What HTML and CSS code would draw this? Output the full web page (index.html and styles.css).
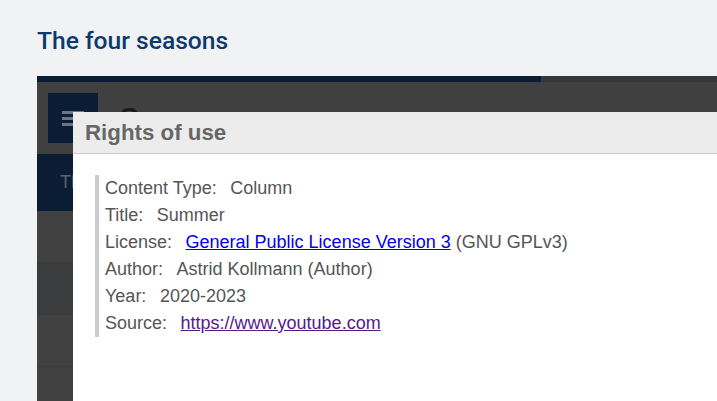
FILE: index.html
```html
<!DOCTYPE html>
<html lang="en">
<head>
<meta charset="utf-8">
<title>The four seasons</title>
<link rel="stylesheet" href="styles.css">
</head>
<body>
<div class="page">
  <h1 class="page-title">The four seasons</h1>
  <div class="player">
    <div class="progress"><div class="progress-fill"></div></div>
    <div class="player-header">
      <div class="menu-btn">
        <svg width="22" height="18" viewBox="0 0 22 18"><rect x="0" y="2" width="22" height="3" fill="#6b7585"/><rect x="0" y="8" width="22" height="3" fill="#6b7585"/><rect x="0" y="14" width="22" height="3" fill="#6b7585"/></svg>
      </div>
      <div class="player-heading">Summer</div>
    </div>
    <div class="player-nav"><span class="nav-text">The four seasons</span></div>
    <div class="player-row"></div>
    <div class="player-row alt"></div>
    <div class="player-row"></div>
    <div class="player-row"></div>

    <div class="dialog">
      <div class="dialog-head"><h2 class="dialog-title">Rights of use</h2></div>
      <div class="dialog-body">
        <dl class="rights">
          <div class="rights-row"><dt>Content Type:</dt><dd>Column</dd></div>
          <div class="rights-row"><dt>Title:</dt><dd>Summer</dd></div>
          <div class="rights-row"><dt>License:</dt><dd><a class="link" href="#gpl">General Public License Version 3</a> (GNU GPLv3)</dd></div>
          <div class="rights-row"><dt>Author:</dt><dd>Astrid Kollmann (Author)</dd></div>
          <div class="rights-row"><dt>Year:</dt><dd>2020-2023</dd></div>
          <div class="rights-row"><dt>Source:</dt><dd><a class="link visited" href="#yt">https://www.youtube.com</a></dd></div>
        </dl>
      </div>
    </div>
  </div>
</div>
</body>
</html>
```

FILE: styles.css
```css
html, body {
  margin: 0;
  padding: 0;
  height: 100%;
  overflow: hidden;
}
body {
  background: #f1f2f4;
  font-family: "Liberation Sans", Arial, sans-serif;
}
.page {
  padding: 27px 0 0 37px;
}
.page-title {
  margin: 0 0 21px 0;
  font-family: Roboto, "Noto Sans", sans-serif;
  font-weight: 500;
  font-size: 24.6px;
  line-height: 28px;
  color: #0d3a6d;
}
.player {
  position: relative;
  background: #404040;
  height: 330px;
}
.progress {
  height: 6px;
  background: #35373b;
}
.progress-fill {
  width: 504px;
  height: 6px;
  background: #0b1d34;
}
.player-header {
  height: 72px;
  box-sizing: border-box;
  padding: 11px;
  display: flex;
  align-items: center;
  gap: 22px;
  background: #404040;
}
.menu-btn {
  width: 50px;
  height: 50px;
  background: #0b1d34;
  display: flex;
  align-items: center;
  justify-content: center;
}
.player-heading {
  color: #1b1b1b;
  font-size: 28px;
  font-weight: bold;
}
.player-nav {
  height: 57px;
  background: #0b1d34;
  display: flex;
  align-items: center;
  padding-left: 23px;
}
.nav-text {
  color: #5e6166;
  font-size: 18px;
}
.player-row {
  height: 51px;
  border-bottom: 1px solid #3a3a3a;
  background: #414141;
}
.player-row.alt {
  background: #3b3c3e;
}
.dialog {
  position: absolute;
  left: 36px;
  top: 36px;
  right: 0;
  bottom: 0;
  background: #ffffff;
}
.dialog-head {
  height: 41px;
  background: #ececec;
  border-bottom: 1px solid #cccccc;
  display: flex;
  align-items: center;
  padding-left: 12px;
}
.dialog-title {
  margin: 0;
  font-size: 22.3px;
  font-weight: bold;
  color: #666666;
}
.dialog-body {
  padding: 21px 0 0 22px;
}
.rights {
  margin: 0;
  border-left: 4px solid #cccccc;
  padding-left: 6px;
  font-size: 18px;
  line-height: 27px;
  color: #555555;
}
.rights-row {
  display: flex;
  white-space: nowrap;
}
.rights dt {
  margin: 0;
}
.rights dd {
  margin: 0 0 0 13.5px;
}
.link {
  color: #0000ee;
  text-decoration: underline;
}
.link.visited {
  color: #551a8b;
}
```
